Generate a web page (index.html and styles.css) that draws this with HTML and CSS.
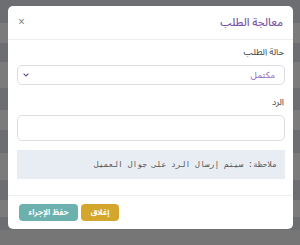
FILE: index.html
```html
<!DOCTYPE html>
<html lang="ar" dir="rtl">
<head>
<meta charset="utf-8">
<link rel="stylesheet" href="styles.css">
</head>
<body>
<div class="backdrop">
  <div class="band dark" style="height:23px"></div>
  <div class="band light" style="height:20px"></div>
  <div class="band dark" style="height:19px"></div>
  <div class="band light" style="height:26px"></div>
  <div class="band dark" style="height:22px"></div>
  <div class="band light" style="height:20px"></div>
  <div class="band dark" style="height:23px"></div>
  <div class="band light" style="height:27px"></div>
  <div class="band dark" style="height:20px"></div>
  <div class="band light" style="height:17px"></div>
  <div class="band dark" style="height:13px"></div>
  <div class="band bottom" style="height:15px"></div>
</div>
<div class="modal">
  <div class="modal-header">
    <h2 class="title">معالجة الطلب</h2>
    <span class="close">×</span>
  </div>
  <div class="modal-body">
    <label class="label">حالة الطلب</label>
    <div class="select">
      <span class="select-value">مكتمل</span>
      <svg class="chev" width="6" height="4" viewBox="0 0 6 4"><path d="M0.6 0.6 L3 3 L5.4 0.6" fill="none" stroke="#6a4c93" stroke-width="1.1"/></svg>
    </div>
    <label class="label label-reply">الرد</label>
    <div class="input"></div>
    <div class="note">ملاحظة: سيتم إرسال الرد على جوال العميل</div>
  </div>
  <div class="modal-footer">
    <button class="btn btn-close">إغلاق</button>
    <button class="btn btn-save">حفظ الإجراء</button>
  </div>
</div>
</body>
</html>
```
FILE: styles.css
```css
html, body {
  margin: 0;
  padding: 0;
}
body {
  width: 300px;
  height: 245px;
  overflow: hidden;
  position: relative;
  font-family: "Noto Sans Arabic", "DejaVu Sans", sans-serif;
}
.backdrop {
  display: flex;
  flex-direction: column;
}
.band.dark { background: #6d6e71; }
.band.light { background: #7b7b7b; }
.band.bottom { background: #767676; }

.modal {
  position: absolute;
  top: 6px;
  left: 8px;
  width: 285px;
  height: 223px;
  background: #fff;
  border-radius: 5px;
  display: flex;
  flex-direction: column;
}
.modal-header {
  height: 33px;
  border-bottom: 1px solid #eceef0;
  display: flex;
  align-items: center;
  justify-content: space-between;
  padding: 0 10px 0 10px;
}
.title {
  margin: 0;
  font-size: 11px;
  font-weight: 500;
  color: #7a56a8;
}
.close {
  font-size: 12px;
  color: #888;
  line-height: 1;
}
.modal-body {
  flex: 1;
  padding: 6px 8px 0 9px;
  display: flex;
  flex-direction: column;
  border-bottom: 1px solid #eceef0;
}
.label {
  font-size: 9px;
  color: #444;
  height: 14px;
  line-height: 14px;
  padding-right: 1px;
}
.select {
  margin-top: 5px;
  height: 18px;
  border: 1px solid #dcdce3;
  border-radius: 5px;
  display: flex;
  align-items: center;
  justify-content: space-between;
  padding: 0 9px 0 5px;
}
.select-value {
  font-size: 9px;
  color: #8a68b8;
}
.chev { display: block; }
.label-reply {
  margin-top: 11px;
}
.input {
  margin-top: 5px;
  height: 24px;
  border: 1px solid #dcdce3;
  border-radius: 5px;
}
.note {
  margin-top: 9px;
  height: 29px;
  background: #e8edf4;
  display: flex;
  align-items: center;
  padding: 0 8px;
  font-family: "DejaVu Sans Mono", monospace;
  font-size: 8px;
  color: #555;
}
.modal-footer {
  height: 33px;
  display: flex;
  align-items: center;
  justify-content: flex-end;
  gap: 3px;
  padding: 0 11px;
}
.btn {
  border: none;
  border-radius: 4px;
  height: 17px;
  padding: 0 6px;
  font-family: inherit;
  font-size: 8px;
  font-weight: 700;
  color: #fff;
}
.btn-close { background: #d4a72c; width: 38px; }
.btn-save { background: #6cb1ae; width: 59px; }
```
